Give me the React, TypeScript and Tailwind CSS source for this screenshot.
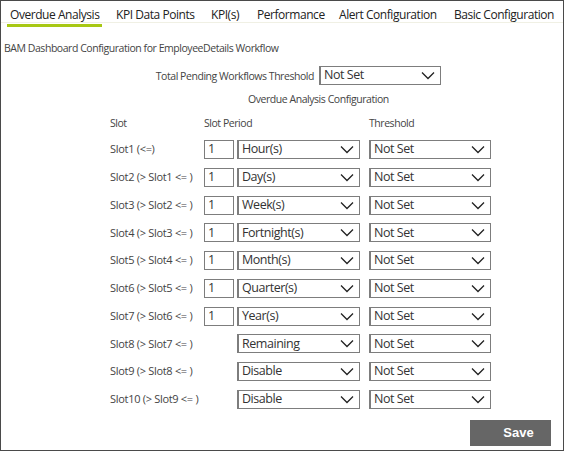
import React from 'react';

const tabs = [
  { t: 'Overdue Analysis', w: 'w-[106px]' },
  { t: 'KPI Data Points', w: 'w-[95px]' },
  { t: 'KPI(s)', w: 'w-[46px]' },
  { t: 'Performance', w: 'w-[82px]' },
  { t: 'Alert Configuration', w: 'w-[115px]' },
  { t: 'Basic Configuration', w: 'w-[105px]' },
];

const rows = [
  { label: 'Slot1 (<=)', num: true, period: 'Hour(s)' },
  { label: 'Slot2 (> Slot1 <= )', num: true, period: 'Day(s)' },
  { label: 'Slot3 (> Slot2 <= )', num: true, period: 'Week(s)' },
  { label: 'Slot4 (> Slot3 <= )', num: true, period: 'Fortnight(s)' },
  { label: 'Slot5 (> Slot4 <= )', num: true, period: 'Month(s)' },
  { label: 'Slot6 (> Slot5 <= )', num: true, period: 'Quarter(s)' },
  { label: 'Slot7 (> Slot6 <= )', num: true, period: 'Year(s)' },
  { label: 'Slot8 (> Slot7 <= )', num: false, period: 'Remaining' },
  { label: 'Slot9 (> Slot8 <= )', num: false, period: 'Disable' },
  { label: 'Slot10 (> Slot9 <= )', num: false, period: 'Disable' },
];

function Chevron() {
  return (
    <svg width="14" height="9" viewBox="0 0 14 9" className="shrink-0">
      <path d="M1 1.5 L7 7.5 L13 1.5" fill="none" stroke="#222" strokeWidth="1.3" />
    </svg>
  );
}

function Select({ value, w }: { value: string; w: string }) {
  return (
    <div className={`${w} h-[19px] flex items-center justify-between border border-[#7d7d7d] border-l-2 pl-[3px] pr-[5px] text-[12.5px] text-[#333] bg-white whitespace-nowrap`}>
      <span className="leading-none tracking-[-0.45px]">{value}</span>
      <Chevron />
    </div>
  );
}

const label = 'text-[10.5px] text-[#444] tracking-[-0.45px] leading-[14px] whitespace-nowrap';

export default function App() {
  return (
    <div className="w-[566px] h-[453px] bg-white" style={{ fontFamily: '"Open Sans", "Noto Sans", sans-serif' }}>
      <div className="w-[564px] h-[451px] border border-[#4a4a4a]">
        {/* Tabs */}
        <div className="h-[22px] flex items-start border-b border-[#f0f0e4] pl-[6px]">
          {tabs.map((tab, i) => (
            <div key={tab.t} className={`${tab.w} shrink-0`}>
              <div
                className={`inline-flex h-[21px] items-center px-[3px] pt-[1px] text-[12px] text-[#222] tracking-[-0.45px] whitespace-nowrap ${
                  i === 0 ? 'border-b-[3px] border-[#a8c814]' : ''
                }`}
              >
                {tab.t}
              </div>
            </div>
          ))}
        </div>

        <div className={`mt-[18px] pl-[3px] ${label}`}>
          BAM Dashboard Configuration for EmployeeDetails Workflow
        </div>

        <div className="mt-[11px] flex items-center">
          <div className={`w-[313px] text-right ${label}`}>Total Pending Workflows Threshold</div>
          <div className="ml-[5px]">
            <Select value="Not Set" w="w-[122px]" />
          </div>
        </div>

        <div className={`mt-[7px] pl-[247px] ${label}`}>Overdue Analysis Configuration</div>

        <div className={`mt-[10px] flex ${label}`}>
          <div className="pl-[109px] w-[203px]">Slot</div>
          <div className="w-[165px]">Slot Period</div>
          <div>Threshold</div>
        </div>

        <div className="mt-[10px] flex flex-col gap-[8.75px]">
          {rows.map((r) => (
            <div key={r.label} className="flex items-center h-[19px]">
              <div className="pl-[109px] w-[203px] text-[11px] text-[#444] tracking-[-0.3px] whitespace-nowrap">{r.label}</div>
              <div className="w-[33px]">
                {r.num && (
                  <div className="w-[30px] h-[19px] border border-[#7d7d7d] pl-[3px] text-[12.5px] text-[#333] flex items-center leading-none">1</div>
                )}
              </div>
              <Select value={r.period} w="w-[123px]" />
              <div className="ml-[9px]">
                <Select value="Not Set" w="w-[122px]" />
              </div>
            </div>
          ))}
        </div>

        <div className="flex justify-end pr-[12px] mt-[11px]">
          <button
            className="w-[81px] h-[26px] bg-[#666666] text-white text-[13px] font-semibold pl-[16px]"
            style={{ fontFamily: '"Liberation Sans", Arial, sans-serif' }}
          >
            Save
          </button>
        </div>
      </div>
    </div>
  );
}
